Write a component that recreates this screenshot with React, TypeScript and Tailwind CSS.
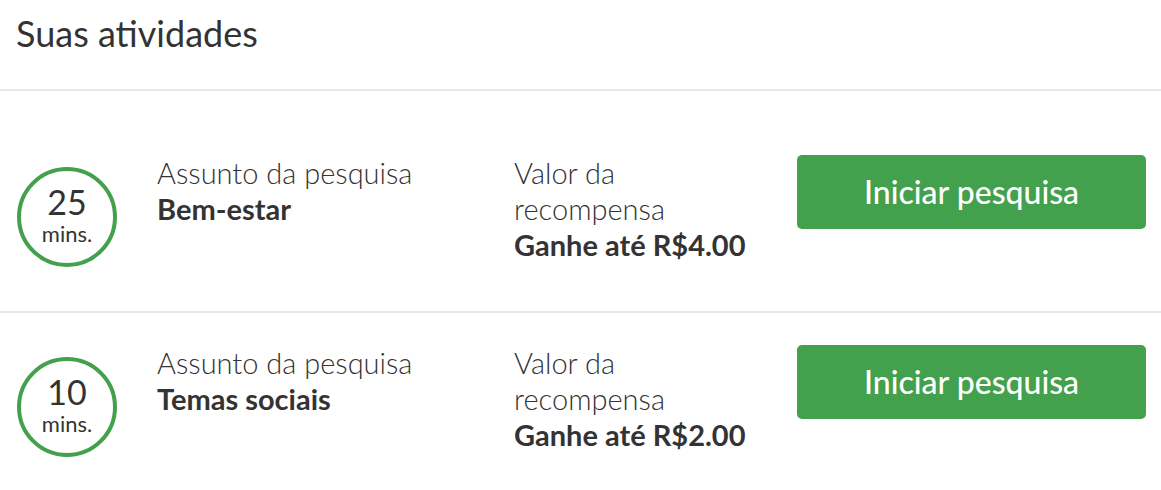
import React from "react";

type Activity = {
	minutes: number;
	topic: string;
	reward: string;
};

const activities: Activity[] = [
	{ minutes: 25, topic: "Bem-estar", reward: "Ganhe até R$4.00" },
	{ minutes: 10, topic: "Temas sociais", reward: "Ganhe até R$2.00" },
];

function ActivityRow({ item, first }: { item: Activity; first: boolean }) {
	return (
		<div
			className={
				"flex items-start pl-[17px] pr-[15px] pb-[44px] border-b-2 border-[#e8e8e8] " +
				(first ? "pt-[64px]" : "pt-[32px]")
			}
		>
			<div className="mt-3 w-[100px] h-[100px] shrink-0 rounded-full border-4 border-[#43a04c] flex flex-col items-center justify-center pb-1 text-[#333]">
				<span className="text-[34px] leading-none">{item.minutes}</span>
				<span className="text-[22px] leading-none mt-1">mins.</span>
			</div>
			<div className="ml-10 w-[357px] shrink-0 text-[29px] leading-[36px] text-[#333]">
				<p className="font-light">Assunto da pesquisa</p>
				<p className="font-bold">{item.topic}</p>
			</div>
			<div className="w-[283px] shrink-0 text-[29px] leading-[36px] text-[#333]">
				<div className="w-[245px]">
					<p className="font-light">Valor da recompensa</p>
					<p className="font-bold whitespace-nowrap">{item.reward}</p>
				</div>
			</div>
			<button
				type="button"
				className="w-[349px] h-[74px] shrink-0 rounded-[5px] bg-[#43a04c] text-white text-[32px] font-medium flex items-center justify-center"
			>
				Iniciar pesquisa
			</button>
		</div>
	);
}

export default function App() {
	return (
		<div className="w-[1161px] h-[490px] overflow-hidden bg-white font-['Lato',sans-serif]">
			<div className="h-[91px] px-4 pt-3 border-b-2 border-[#e8e8e8]">
				<h1 className="text-[36px] leading-[1.2] text-[#333]">Suas atividades</h1>
			</div>
			{activities.map((a, i) => (
				<ActivityRow key={a.minutes} item={a} first={i === 0} />
			))}
		</div>
	);
}
